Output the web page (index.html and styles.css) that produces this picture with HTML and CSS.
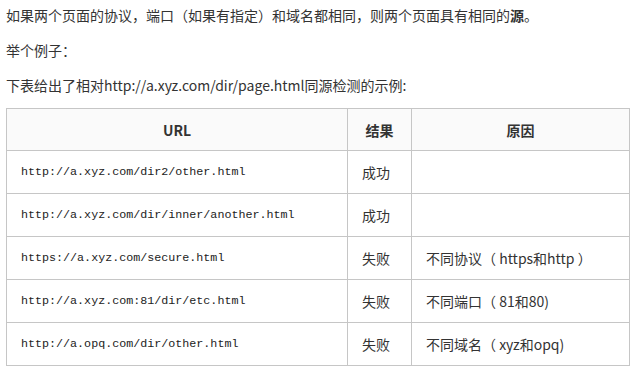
FILE: index.html
```html
<!DOCTYPE html>
<html lang="zh-CN">
<head>
<meta charset="utf-8">
<link rel="stylesheet" href="styles.css">
</head>
<body>
<div class="page">
  <p class="para">如果两个页面的协议，端口（如果有指定）和域名都相同，则两个页面具有相同的<strong>源</strong>。</p>
  <p class="para">举个例子：</p>
  <p class="para">下表给出了相对http://a.xyz.com/dir/page.html同源检测的示例:</p>
  <table class="origin-table">
    <colgroup>
      <col class="col-url">
      <col class="col-result">
      <col class="col-reason">
    </colgroup>
    <thead>
      <tr>
        <th>URL</th>
        <th>结果</th>
        <th>原因</th>
      </tr>
    </thead>
    <tbody>
      <tr><td class="url">http://a.xyz.com/dir2/other.html</td><td>成功</td><td></td></tr>
      <tr><td class="url">http://a.xyz.com/dir/inner/another.html</td><td>成功</td><td></td></tr>
      <tr><td class="url">https://a.xyz.com/secure.html</td><td>失败</td><td>不同协议（ https和http ）</td></tr>
      <tr><td class="url">http://a.xyz.com:81/dir/etc.html</td><td>失败</td><td>不同端口（ 81和80)</td></tr>
      <tr><td class="url">http://a.opq.com/dir/other.html</td><td>失败</td><td>不同域名（ xyz和opq)</td></tr>
    </tbody>
  </table>
</div>
</body>
</html>
```

FILE: styles.css
```css
html, body {
  margin: 0;
  padding: 0;
  background: #ffffff;
}
body {
  font-family: "Noto Sans CJK SC", "Open Sans", sans-serif;
  font-size: 14px;
  color: #333333;
}
.page {
  padding: 3px 6px 0 6px;
}
.para {
  margin: 0 0 11px 0;
  line-height: 24px;
}
.para strong {
  font-weight: 700;
}
.origin-table {
  margin-top: 10px;
  border-collapse: collapse;
  width: 624px;
  table-layout: fixed;
}
.col-url { width: 341px; }
.col-result { width: 64px; }
.origin-table th,
.origin-table td {
  border: 1px solid #c6c6c6;
  padding: 0 14px;
  text-align: left;
  vertical-align: middle;
  line-height: 20px;
}
.origin-table th {
  height: 41px;
  background: #fafafa;
  text-align: center;
  font-weight: 700;
}
.origin-table td {
  height: 42px;
  white-space: nowrap;
}
.origin-table td.url {
  font-family: "Liberation Mono", monospace;
  font-size: 11.7px;
  color: #222;
}
```
